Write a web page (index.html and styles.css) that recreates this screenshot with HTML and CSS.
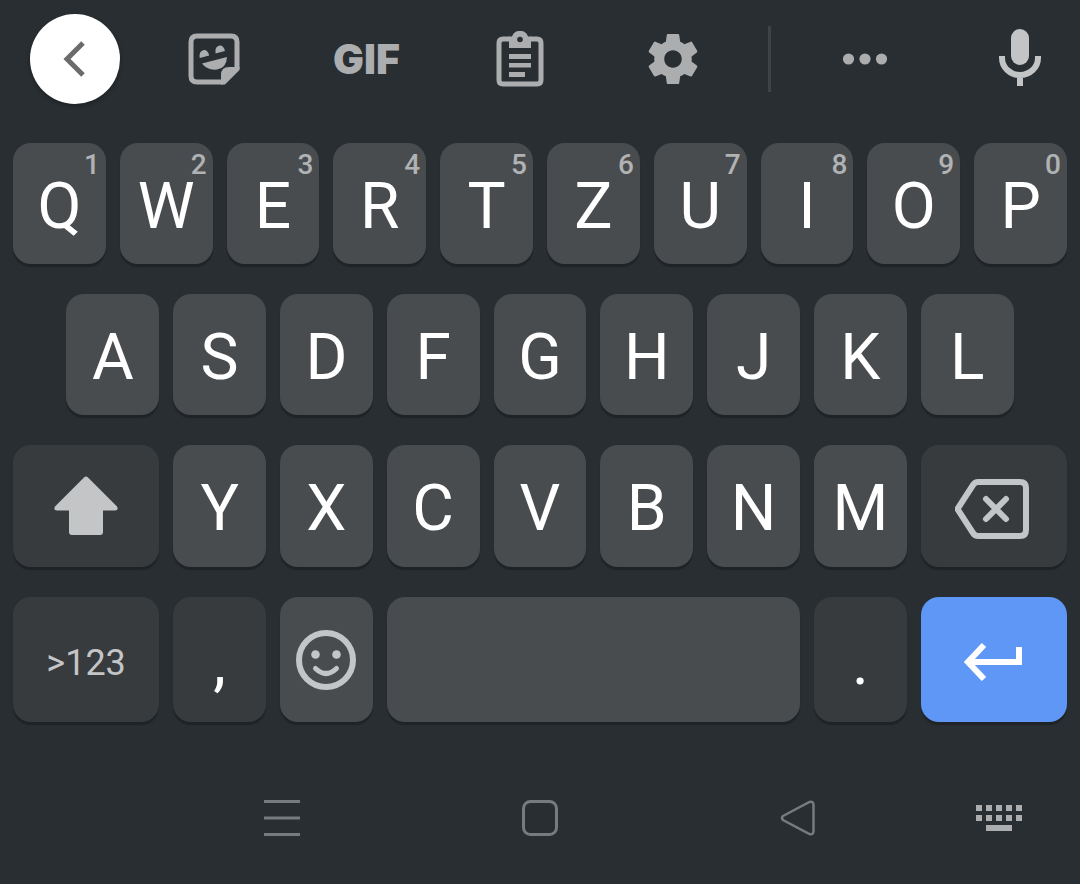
FILE: index.html
```html
<!DOCTYPE html>
<html lang="en">
<head>
    <meta charset="UTF-8">
    <meta name="viewport" content="width=device-width, initial-scale=1.0">
    <title>Keyboard</title>
    <link rel="stylesheet" href="styles.css">
</head>
<body>
    <!-- suggestion bar -->
    <header class="toolbar">
        <button class="tool back" aria-label="Back">
            <svg class="line" width="90" height="90" viewBox="0 0 90 90"><path d="M53 29L37 45l16 16" stroke="#6b6b6b" stroke-width="5"/></svg>
        </button>
        <button class="tool" aria-label="Stickers">
            <svg width="52" height="52" viewBox="0 0 52 52">
                <path d="M35 49H9q-6 0-6-6V9q0-6 6-6h34q6 0 6 6v27" fill="none" stroke="currentColor" stroke-width="5"/>
                <path d="M33 51.500V42q0-8 8-8h10.500v3L37 51.500z"/>
                <path d="M11.700 25q-1-7 4-8q4-.5 5.500 5.500zM27.500 20.500q-1-7 4-8q4-.5 5.500 5.500zM14 30.500L39 24Q38.500 35 29 36.500Q19 37.500 14 30.500z"/>
            </svg>
        </button>
        <button class="tool gif">GIF</button>
        <button class="tool" aria-label="Clipboard">
            <svg width="48" height="56" viewBox="0 0 48 56">
                <path d="M14 8H7q-4 0-4 4v37q0 4 4 4h34q4 0 4-4V12q0-4-4-4h-7" fill="none" stroke="currentColor" stroke-width="5"/>
                <path fill-rule="evenodd" d="M13 5.500h3a8.500 8.500 0 0 1 16 0h3v11.500H13zM24 5.700a2.800 2.800 0 1 0 0 5.600a2.800 2.800 0 1 0 0-5.600z"/>
                <path d="M13 23h22v5H13zM13 32h22v4.500H13zM13 41h16v5H13z"/>
            </svg>
        </button>
        <button class="tool" aria-label="Settings">
            <svg width="60" height="60" viewBox="0 0 24 24"><path d="M19.430 12.980c.04-.32.07-.64.07-.98s-.03-.66-.07-.98l2.110-1.650c.19-.15.24-.42.12-.64l-2-3.460c-.12-.22-.39-.3-.61-.22l-2.490 1c-.52-.4-1.080-.73-1.690-.98l-.38-2.650C14.460 2.180 14.250 2 14 2h-4c-.25 0-.46.18-.49.42l-.38 2.650c-.61.25-1.170.59-1.690.98l-2.490-1c-.23-.09-.49 0-.61.22l-2 3.460c-.13.22-.07.49.12.64l2.110 1.650c-.04.32-.07.65-.07.98s.03.66.07.98l-2.110 1.650c-.19.15-.24.42-.12.64l2 3.460c.12.22.39.3.61.22l2.490-1c.52.4 1.080.73 1.690.98l.38 2.650c.03.24.24.42.49.42h4c.25 0 .46-.18.49-.42l.38-2.650c.61-.25 1.170-.59 1.690-.98l2.490 1c.23.09.49 0 .61-.22l2-3.460c.12-.22.07-.49-.12-.64l-2.110-1.650zM12 15.500c-1.930 0-3.500-1.570-3.500-3.500s1.570-3.500 3.500-3.500 3.500 1.570 3.500 3.500-1.570 3.500-3.500 3.500z"/></svg>
        </button>
        <span class="divider"></span>
        <button class="tool" aria-label="More">
            <svg width="46" height="12" viewBox="0 0 46 12"><circle cx="6.500" cy="6" r="5.600"/><circle cx="23" cy="6" r="5.600"/><circle cx="39.500" cy="6" r="5.600"/></svg>
        </button>
        <button class="tool mic" aria-label="Voice input">
            <svg width="42" height="60" viewBox="0 0 42 60">
                <rect x="12" y="0" width="18" height="36" rx="9"/>
                <path d="M3 27v2a18 17 0 0 0 36 0v-2M21 45v12" fill="none" stroke="currentColor" stroke-width="6"/>
            </svg>
        </button>
    </header>

    <main class="keyboard">
        <button class="key">Q<span class="hint">1</span></button>
        <button class="key">W<span class="hint">2</span></button>
        <button class="key">E<span class="hint">3</span></button>
        <button class="key">R<span class="hint">4</span></button>
        <button class="key">T<span class="hint">5</span></button>
        <button class="key">Z<span class="hint">6</span></button>
        <button class="key">U<span class="hint">7</span></button>
        <button class="key">I<span class="hint">8</span></button>
        <button class="key">O<span class="hint">9</span></button>
        <button class="key">P<span class="hint">0</span></button>

        <button class="key indent">A</button>
        <button class="key">S</button>
        <button class="key">D</button>
        <button class="key">F</button>
        <button class="key">G</button>
        <button class="key">H</button>
        <button class="key">J</button>
        <button class="key">K</button>
        <button class="key">L</button>

        <button class="key dark wide icon" aria-label="Shift">
            <svg width="64" height="60" viewBox="0 0 64 60"><path d="M30 1.500q2-2 4 0L63 30.500q2 4-2 4H49V56q0 3-3 3H18q-3 0-3-3V34.500H3q-4 0-2-4z"/></svg>
        </button>
        <button class="key">Y</button>
        <button class="key">X</button>
        <button class="key">C</button>
        <button class="key">V</button>
        <button class="key">B</button>
        <button class="key">N</button>
        <button class="key">M</button>
        <button class="key dark wide icon" aria-label="Delete">
            <svg class="line" width="78" height="66" viewBox="0 -6 78 66" stroke-width="6">
                <path d="M23 3h42q6 0 6 6v42q0 6-6 6H23q-3 0-5-3L2.500 30L18 6q2-3 5-3z"/>
                <path d="M31 20l20 20M51 20L31 40" stroke-linecap="round"/>
            </svg>
        </button>

        <button class="key dark wide symbols">&gt;123</button>
        <button class="key dark">,</button>
        <button class="key icon" aria-label="Emoji">
            <svg width="60" height="60" viewBox="0 0 60 60">
                <circle cx="30" cy="30" r="27" fill="none" stroke="currentColor" stroke-width="6"/>
                <circle cx="19.500" cy="24.500" r="4.300"/><circle cx="40.500" cy="24.500" r="4.300"/>
                <path d="M19.500 38.500q10.500 10 21 0" fill="none" stroke="currentColor" stroke-width="5" stroke-linecap="round"/>
            </svg>
        </button>
        <button class="key space" aria-label="Space"></button>
        <button class="key dark">.</button>
        <button class="key enter wide icon" aria-label="Enter">
            <svg class="line" width="60" height="42" viewBox="0 -4 60 42">
                <path d="M20 2L4 19l16 17" stroke-width="6"/>
                <path d="M6 19h49V4" stroke-width="6"/>
            </svg>
        </button>
    </main>

    <!-- system navigation -->
    <nav class="navbar">
        <button class="nav recent" aria-label="Recent apps">
            <svg class="line" width="36" height="36" viewBox="0 0 36 36"><path d="M0 1.500h36M0 18h36M0 34.500h36" stroke-width="3"/></svg>
        </button>
        <button class="nav" aria-label="Home">
            <svg class="line" width="36" height="36" viewBox="0 0 36 36"><rect x="1.500" y="1.500" width="33" height="33" rx="7" stroke-width="3"/></svg>
        </button>
        <button class="nav" aria-label="Back">
            <svg class="line" width="36" height="36" viewBox="0 0 36 36"><path d="M3 16L29.500 2Q33.500 1 33.500 5v26q0 4-4 3L3 20q-2-2 0-4z" stroke-width="2.500"/></svg>
        </button>
        <button class="nav switch" aria-label="Change keyboard">
            <svg width="46" height="26" viewBox="0 0 46 26">
                <path d="M0 0h6v6H0zM10 0h6v6h-6zM20 0h6v6h-6zM30 0h6v6h-6zM40 0h6v6h-6z"/>
                <path d="M0 10h6v6H0zM10 10h6v6h-6zM20 10h6v6h-6zM30 10h6v6h-6zM40 10h6v6h-6z"/>
                <path d="M10 20h26v6H10z"/>
            </svg>
        </button>
    </nav>
</body>
</html>
```
FILE: styles.css
```css
* {
    box-sizing: border-box;
}
body {
    margin: 0;
    min-height: 100vh;
    display: flex;
    flex-direction: column;
    background-color: #292e32;
    color: #fff;
    font-family: Roboto, sans-serif;
}
button {
    border: 0;
    padding: 0;
    background: none;
    color: inherit;
    font: inherit;
}
svg {
    display: block;
    fill: currentColor;
}
.line {
    fill: none;
    stroke: currentColor;
}

/* top bar */
.toolbar {
    display: grid;
    grid-template-columns: 137fr repeat(4, 153fr) 40fr 152fr 139fr;
    align-items: center;
    justify-items: center;
    height: 118px;
    color: #abadaf;
}
.back {
    justify-self: start;
    margin-left: 30px;
    border-radius: 50%;
    background-color: #fff;
    box-shadow: 0 2px 4px rgba(0, 0, 0, 0.3);
}
.gif {
    font-family: Inter, sans-serif;
    font-size: 41px;
    font-weight: 900;
}
.divider {
    width: 3px;
    height: 66px;
    background-color: #3e4347;
}
.mic {
    justify-self: end;
    margin-right: 39px;
    color: #c2c4c6;
}

/* keys: every letter takes 2 of the 20 columns */
.keyboard {
    display: grid;
    grid-template-columns: repeat(20, 1fr);
    grid-template-rows: 121px 121px 122px 125px;
    gap: 30px 14px;
    padding: 25px 13px 0;
}
.key {
    position: relative;
    grid-column: span 2;
    padding-top: 6px;
    border-radius: 18px;
    background-color: #494c4e;
    box-shadow: 0 3px 1px #1f2326;
    font-size: 64px;
    line-height: 72px;
}
.key.indent {
    grid-column: 2 / span 2;
}
.key.wide {
    grid-column: span 3;
}
.key.space {
    grid-column: span 8;
}
.key.dark {
    background-color: #373b3e;
}
.key.enter {
    background-color: #5e97f6;
}
.key.icon {
    display: flex;
    align-items: center;
    justify-content: center;
    padding-top: 0;
    color: #c4c5c7;
}
.key.enter.icon {
    color: #fff;
}
.key.symbols {
    color: #c4c5c7;
    font-size: 36px;
}
.hint {
    position: absolute;
    top: 6px;
    right: 6px;
    color: #b0b2b4;
    font-size: 28px;
    font-weight: 500;
    line-height: 32px;
}

/* bottom bar */
.navbar {
    display: grid;
    grid-template-columns: 153fr repeat(3, 258fr) 153fr;
    align-items: center;
    justify-items: center;
    flex: 1;
    padding-top: 30px;
    color: #777b7e;
}
.recent {
    grid-column: 2;
}
.switch {
    justify-self: end;
    margin-right: 58px;
    color: #abadaf;
}
```
